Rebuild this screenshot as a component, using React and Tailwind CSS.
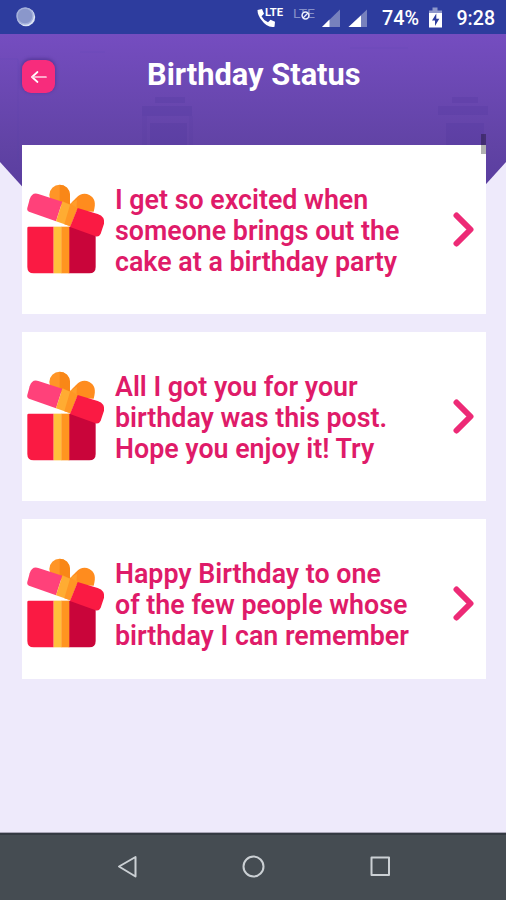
import React from 'react';

const messages = [
  { id: 1, lines: ['I get so excited when', 'someone brings out the', 'cake at a birthday party'], height: 'h-[169px]', pad: 'pt-px' },
  { id: 2, lines: ['All I got you for your', 'birthday was this post.', 'Hope you enjoy it! Try'], height: 'h-[169px]', pad: 'pt-px' },
  { id: 3, lines: ['Happy Birthday to one', 'of the few people whose', 'birthday I can remember'], height: 'h-[160px]', pad: 'pt-[10px]' },
];

const GiftIcon = () => (
  <svg className="w-[110px] h-[110px] -ml-[7px] -mr-[10px] shrink-0" viewBox="0 0 330 330">
    {/* bow */}
    <circle cx="134" cy="60" r="31" fill="#ff9527" />
    <path d="M134 29A31 31 0 0 1 165 60V95L134 88Z" fill="#f98717" />
    <path d="M161 100C164 86 176 76 184 68C195 55 211 53 223 60C239 69 244 83 236 110L186 108Z" fill="#ff8c1e" />
    <path d="M142 78L163 88L186 74L184 106L142 100Z" fill="#ff9d2b" />
    {/* box */}
    <path d="M37 155H116V295H56Q37 295 37 276V159Q37 155 41 155Z" fill="#fa1a43" />
    <path d="M161 155H242V276Q242 295 223 295H161Z" fill="#c9053a" />
    <path d="M116 155H140V295H116Z" fill="#ffc03b" />
    <path d="M139 155H163V295H139Z" fill="#ff9520" />
    {/* lid */}
    <path d="M70 57L142 80L123 139L42 110Q35 107 37 99L44 73Q51 51 70 57Z" fill="#ff417a" />
    <path d="M142 80L188 99L166 154L123 139Z" fill="#ffac32" />
    <path d="M166 86L188 99L166 154L148 148Z" fill="#ff9624" />
    <path d="M188 99L248 117Q271 125 267 146L257 176Q252 187 242 184L165 156Z" fill="#fa1a43" />
  </svg>
);

const StatusBar = () => (
  <div className="h-[34px] bg-[#2d3c9e] text-white flex items-center">
    <svg className="w-[506px] h-[34px] shrink-0" viewBox="0 0 506 34">
      <circle cx="26" cy="17" r="9.2" fill="#dce4f4" />
      <circle cx="25" cy="16" r="8" fill="#8a97cb" stroke="#a5b1db" strokeWidth="1.5" />
      <path d="M257.500 10l4.500-1 2 4.700-2.500 2.500q2 4 6.500 6l2.500-2.500 4.500 2-.5 5Q267 28 261.500 20q-4-5-4-10" fill="white" />
      <text x="265" y="15.500" fill="white" fontSize="10.500" fontWeight="700" fontFamily="Roboto, sans-serif" textLength="18" lengthAdjust="spacingAndGlyphs">LTE</text>
      <text x="293" y="18" fill="#8590c8" fontSize="12.500" fontFamily="Roboto, sans-serif" textLength="22" lengthAdjust="spacingAndGlyphs">LTE</text>
      <circle cx="305.5" cy="15.5" r="3.4" fill="#2d3c9e" stroke="#edf0fb" strokeWidth="1.5" />
      <path d="M303 18l5-5" stroke="#edf0fb" strokeWidth="1.3" />
      <path d="M322 27L340 9.5V27Z" fill="#7781bd" />
      <path d="M322 27L329.5 19.5V27Z" fill="white" />
      <path d="M348.500 27L367 9.500V27Z" fill="#7781bd" />
      <path d="M348.500 27L361 15.500V27Z" fill="white" />
      <text x="382" y="25" fill="white" fontSize="19.500" fontWeight="500" fontFamily="Roboto, sans-serif" textLength="37" lengthAdjust="spacingAndGlyphs">74%</text>
      <path d="M432.500 7.500h5v3h4.500v5h-13v-5h3.500Z" fill="#8f98cb" />
      <path d="M429 13h13v14.500h-13Z" fill="white" />
      <path d="M436.300 13.500l-4.300 7h3v5.500l4.300-7.300h-3Z" fill="#2d3c9e" />
      <text x="456.500" y="25" fill="white" fontSize="19.500" fontWeight="500" fontFamily="Roboto, sans-serif" textLength="38.500" lengthAdjust="spacingAndGlyphs">9:28</text>
    </svg>
  </div>
);

// Purple banner that sits behind the title and the top of the list
const Banner = () => (
  <svg className="absolute left-0 top-[34px] w-[506px] h-[176px]" viewBox="0 0 506 176">
    <defs>
      <linearGradient id="banner" x1="0" y1="0" x2="0" y2="1">
        <stop offset="0" stopColor="#754dc0" />
        <stop offset="0.62" stopColor="#6143a5" />
        <stop offset="1" stopColor="#553a9b" />
      </linearGradient>
    </defs>
    <path d="M0 0H506V128L459 180H47L0 128Z" fill="url(#banner)" />
    <g fill="#49349a" opacity="0.2">
      <path d="M155 63h30v6h-30zM142 72h50v10h-50zM150 89h37v25h-37z" />
      <path d="M452 63h26v6h-26zM438 72h50v9h-50zM446 89h38v23h-38z" />
      <path d="M142 82h5v32h-5zM189 82h4v32h-4z" opacity="0.5" />
    </g>
    <path d="M0 25H18V128M80 18H105M350 14H408" fill="none" stroke="#5940ac" opacity="0.15" />
  </svg>
);

const MessageCard = ({ message }) => (
  <button className={`${message.height} ${message.pad} w-full bg-white flex items-center text-left`}>
    <GiftIcon />
    <p className="pt-1 w-[337px] shrink-0 whitespace-nowrap font-semibold text-[26.800px] leading-[31.300px] text-[#df1b69]">
      {message.lines.map((line) => (
        <span key={line} className="block">{line}</span>
      ))}
    </p>
    <svg className="w-[24px] h-[36px] shrink-0" viewBox="0 0 24 36" fill="none">
      <path d="M4.500 3.500L18.500 17.500L4.500 31.500" stroke="#ed2a76" strokeWidth="6" strokeLinecap="round" strokeLinejoin="round" />
    </svg>
  </button>
);

const NavBar = () => (
  <div className="h-[67px] bg-[#454c52] border-t-2 border-[#343a42] flex justify-center shadow-[0_-1px_0_#aaa7b8]">
    <svg className="w-[506px] h-[65px]" viewBox="0 0 506 65" fill="none" stroke="#cbd0d4" strokeWidth="2" strokeLinejoin="round">
      <path d="M119 31.500L135.500 22V41.500Z" />
      <circle cx="253.500" cy="31.500" r="10" />
      <rect x="371.500" y="22.500" width="17.500" height="17.500" />
    </svg>
  </div>
);

const App = () => {
  return (
    <div className="w-[506px] h-[900px] bg-[#eeeafb] relative overflow-hidden flex flex-col font-['Roboto',sans-serif]">
      <Banner />
      <StatusBar />

      <header className="relative h-[110.500px] px-[22px] pt-[25px] flex items-start">
        <button className="mt-px w-[33px] h-[33px] rounded-[9px] bg-[#f72c7c] shadow-[0_-1px_3px_1px_#442c8580] flex items-center justify-center">
          <svg className="w-[18px] h-[18px]" viewBox="0 0 18 18" fill="none" stroke="white" strokeWidth="1.700" strokeLinecap="round" strokeLinejoin="round">
            <path d="M7.500 4L2 9l5.500 5" />
            <path d="M2 9h14" stroke="#ffd3e4" />
          </svg>
        </button>
        <h1 className="ml-[92px] text-[30.800px] leading-[32px] font-bold text-white whitespace-nowrap">Birthday Status</h1>
      </header>

      {/* Message list */}
      <main className="relative flex-1 px-[22px] pr-[20px] flex flex-col gap-[18px]">
        {messages.map((message) => (
          <MessageCard key={message.id} message={message} />
        ))}
        <div className="absolute right-[20px] -top-[11px] w-[5px] h-[20px] bg-black/30" />
      </main>

      <NavBar />
    </div>
  );
};

export default App;
